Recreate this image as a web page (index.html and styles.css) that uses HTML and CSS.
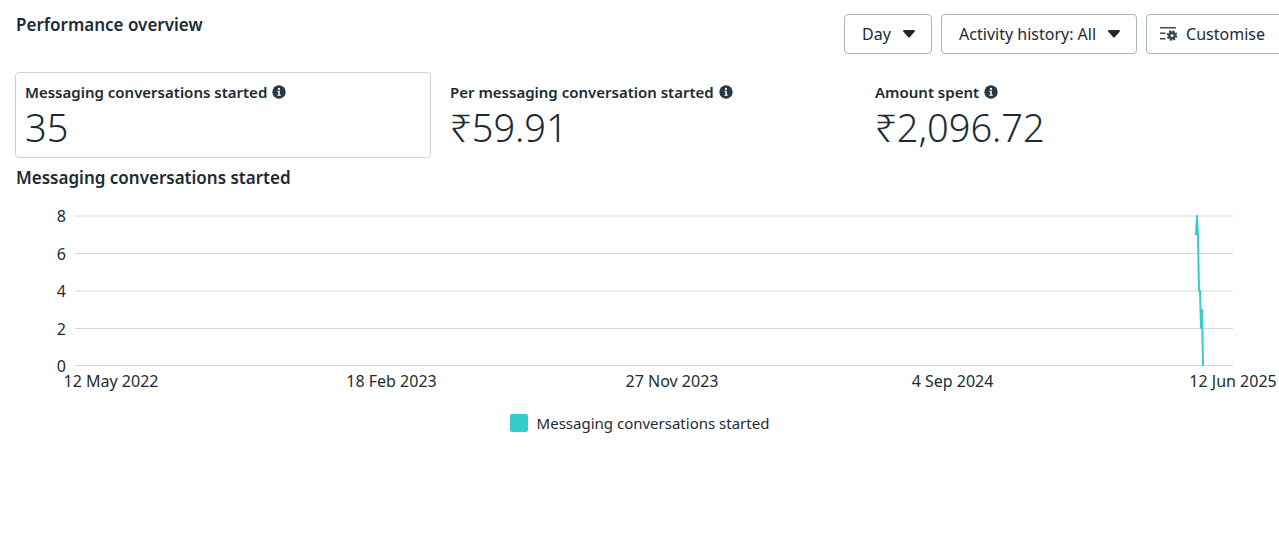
FILE: index.html
```html
<!DOCTYPE html>
<html lang="en-GB">
<head>
<meta charset="utf-8">
<meta name="viewport" content="width=device-width, initial-scale=1">
<title>Performance overview</title>
<link rel="stylesheet" href="styles.css">
</head>
<body>
<svg class="symbols" aria-hidden="true">
  <symbol id="info" viewBox="0 0 14 14"><circle cx="7" cy="7" r="6.7" fill="#283943"/><circle cx="7" cy="3.9" r="1.1" fill="#fff"/><path d="M5.4 5.8H7.8V9.8H8.8V10.8H5.4V9.8H6.3V6.8H5.4Z" fill="#fff"/></symbol>
  <symbol id="caret" viewBox="0 0 12 8"><path d="M1.2 0H10.8C11.8 0 12.3 1.1 11.6 1.8L7 6.9C6.4 7.6 5.6 7.6 5 6.9L.4 1.8C-.3 1.1.2 0 1.2 0Z" fill="#1c2b33"/></symbol>
</svg>
<main class="page">
  <header class="header">
    <h1 class="title">Performance overview</h1>
    <div class="toolbar">
      <div class="dropdown">
        <select class="control select" aria-label="Breakdown"><option>Day</option></select>
        <svg class="caret"><use href="#caret"/></svg>
      </div>
      <div class="dropdown">
        <select class="control select" aria-label="Activity history"><option>Activity history: All</option></select>
        <svg class="caret"><use href="#caret"/></svg>
      </div>
      <button class="control customise" type="button">
        <svg class="customise-icon" viewBox="0 0 18 16" aria-hidden="true">
          <path d="M0 1.7H16M0 7.2H5.5M0 12.7H5.5" fill="none" stroke="#3d4b54" stroke-width="1.4"/>
          <circle cx="12" cy="9.5" r="4.4" fill="none" stroke="#34444e" stroke-width="1.8" stroke-dasharray="1.9 1.556"/>
          <circle cx="12" cy="9.5" r="2.7" fill="none" stroke="#34444e" stroke-width="2.4"/>
        </svg>
        Customise
      </button>
    </div>
  </header>

  <section class="metrics">
    <div class="metric metric-selected">
      <h2 class="metric-label">Messaging conversations started <svg class="info"><use href="#info"/></svg></h2>
      <p class="metric-value">35</p>
    </div>
    <div class="metric">
      <h2 class="metric-label">Per messaging conversation started <svg class="info"><use href="#info"/></svg></h2>
      <p class="metric-value">₹59.91</p>
    </div>
    <div class="metric">
      <h2 class="metric-label">Amount spent <svg class="info"><use href="#info"/></svg></h2>
      <p class="metric-value">₹2,096.72</p>
    </div>
  </section>

  <section class="chart">
    <h2 class="title">Messaging conversations started</h2>
    <div class="plot-row">
      <div class="y-axis"><span>8</span><span>6</span><span>4</span><span>2</span><span>0</span></div>
      <div class="plot">
        <svg class="series" viewBox="0 0 1158 150" preserveAspectRatio="none" role="img" aria-label="Messaging conversations started by day">
          <path class="grid-line" d="M0 0H1158M0 37.5H1158M0 75H1158M0 112.5H1158M0 149.5H1158"/>
          <path class="data-line" d="M1121 19L1122 0L1123 20L1124 75L1125 75L1126 112L1127 94L1128 150"/>
        </svg>
      </div>
    </div>
    <div class="x-axis"><span>12 May 2022</span><span>18 Feb 2023</span><span>27 Nov 2023</span><span>4 Sep 2024</span><span>12 Jun 2025</span></div>
    <div class="legend"><span class="swatch"></span>Messaging conversations started</div>
  </section>
</main>
</body>
</html>
```
FILE: styles.css
```css
* { box-sizing: border-box; }

body {
  margin: 0;
  overflow-x: hidden;
  background: #fff;
  color: #1c2b33;
  font: 16px/20px "Noto Sans", sans-serif;
}

h1, h2, p { margin: 0; }

.symbols {
  position: absolute;
  width: 0;
  height: 0;
}

.page { padding: 14px 0 0 15px; }

.header {
  display: flex;
  justify-content: space-between;
  height: 58px;
}

.title {
  padding-left: 1px;
  font-size: 17px;
  line-height: 22px;
  font-weight: 600;
}

.toolbar {
  display: flex;
  align-items: flex-start;
  gap: 9px;
  margin-right: -4px;
}

.dropdown { position: relative; }

.control {
  height: 40px;
  border: 1px solid #a9b4bd;
  border-radius: 4px;
  background: #fff;
  color: inherit;
  font: inherit;
}

.select {
  display: block;
  padding: 0 40px 0 17px;
  appearance: none;
}

.caret {
  position: absolute;
  top: 16px;
  right: 17px;
  width: 12px;
  height: 8px;
  pointer-events: none;
}

.customise {
  display: flex;
  align-items: center;
  gap: 8px;
  padding: 0 17px 0 13px;
  white-space: nowrap;
}

.customise-icon {
  width: 18px;
  height: 16px;
}

.metrics {
  display: grid;
  grid-template-columns: repeat(3, 1fr);
  gap: 9px;
  margin-right: -2px;
}

.metric {
  padding: 9px 9px 8px;
  border: 1px solid transparent;
  border-radius: 4px;
}

.metric-selected { border-color: #cbd2d9; }

.metric-label {
  display: flex;
  align-items: center;
  gap: 5px;
  font-size: 15px;
  line-height: 20px;
  font-weight: 600;
  white-space: nowrap;
}

.info {
  width: 14px;
  height: 14px;
}

.metric-value {
  padding-top: 3px;
  font-size: 38px;
  line-height: 44px;
  font-weight: 350;
}

.chart { padding-top: 9px; }

.plot-row {
  display: flex;
  gap: 9px;
  padding: 17px 46px 0 0;
}

.y-axis {
  display: flex;
  flex-direction: column;
  justify-content: space-between;
  width: 51px;
  height: 170px;
  text-align: right;
}

.plot {
  flex: 1;
  padding: 10px 0;
}

.series {
  display: block;
  width: 100%;
  height: 150px;
  overflow: visible;
}

.grid-line, .data-line {
  fill: none;
  vector-effect: non-scaling-stroke;
}

.grid-line { stroke: #d5d9db; }

.data-line {
  stroke: #35cdca;
  stroke-width: 2;
  stroke-linejoin: round;
}

.x-axis {
  display: flex;
  justify-content: space-between;
  margin-top: -5px;
  padding: 0 46px 0 96px;
}

.x-axis span {
  display: flex;
  justify-content: center;
  width: 0;
  white-space: nowrap;
}

.legend {
  display: flex;
  align-items: center;
  justify-content: center;
  gap: 9px;
  padding: 22px 15px 0 0;
  font-size: 15px;
}

.swatch {
  width: 18px;
  height: 18px;
  border-radius: 2px;
  background: #35cdca;
}
```
